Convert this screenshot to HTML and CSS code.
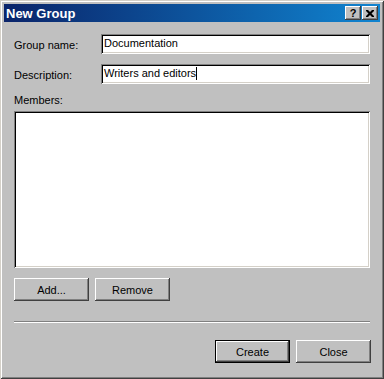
FILE: index.html
```html
<!DOCTYPE html>
<html lang="en">
<head>
    <meta charset="UTF-8">
    <title>New Group</title>
    <link rel="stylesheet" href="styles.css">
</head>
<body>

    <div class="window">
        <div class="titlebar">
            <span class="title">New Group</span>
            <div class="title-buttons">
                <button class="tb-btn">?</button>
                <button class="tb-btn">
                    <svg width="8" height="7" viewBox="0 0 8 7">
                        <path d="M0 0h2l2 2 2-2h2v1l-2.5 2.5L8 6v1H6L4 5 2 7H0V6l2.5-2.5L0 1z" fill="#000"/>
                    </svg>
                </button>
            </div>
        </div>

        <div class="content">
            <div class="field">
                <label>Group name:</label>
                <div class="input">Documentation</div>
            </div>
            <div class="field">
                <label>Description:</label>
                <div class="input">Writers and editors<span class="caret"></span></div>
            </div>

            <div class="members-label">Members:</div>
            <div class="list"></div>

            <div class="btn-row">
                <button class="btn">Add...</button>
                <button class="btn">Remove</button>
            </div>

            <div class="separator"></div>

            <div class="footer">
                <button class="btn default">Create</button>
                <button class="btn">Close</button>
            </div>
        </div>
    </div>

</body>
</html>
```

FILE: styles.css
```css
body {
    margin: 0;
    font-family: "Liberation Sans", Arial, sans-serif;
    font-size: 11px;
    color: #000;
}
.window {
    width: 384px;
    height: 379px;
    box-sizing: border-box;
    padding: 4px;
    background: #c0c0c0;
    box-shadow: inset 1px 1px #d4d0c8, inset -1px -1px #404040,
                inset 2px 2px #fff, inset -2px -2px #808080;
}
.titlebar {
    height: 18px;
    display: flex;
    align-items: center;
    justify-content: space-between;
    padding: 0 2px 0 2px;
    background: linear-gradient(to right, #0a246a, #1084d0);
}
.title {
    color: #fff;
    font-weight: bold;
    font-size: 13px;
}
.title-buttons {
    display: flex;
    gap: 1px;
}
.tb-btn {
    width: 16px;
    height: 14px;
    padding: 0;
    border: none;
    display: flex;
    align-items: center;
    justify-content: center;
    background: #c0c0c0;
    font-family: "Liberation Sans", Arial, sans-serif;
    font-weight: bold;
    font-size: 11px;
    color: #000;
    box-shadow: inset -1px -1px #404040, inset 1px 1px #fff, inset -2px -2px #808080;
}
.content {
    padding: 12px 10px 0 10px;
}
.field {
    display: grid;
    grid-template-columns: 87px 1fr;
    align-items: center;
    height: 20px;
    margin-bottom: 10px;
}
.field label {
    padding-top: 1px;
}
.input {
    height: 20px;
    box-sizing: border-box;
    background: #fff;
    padding: 3px 3px 0 3px;
    white-space: nowrap;
    box-shadow: inset 1px 1px #808080, inset -1px -1px #fff,
                inset 2px 2px #000, inset -2px -2px #d4d0c8;
}
.caret {
    display: inline-block;
    width: 1px;
    height: 13px;
    background: #000;
    vertical-align: -3px;
}
.members-label {
    margin-top: 3px;
    line-height: 13px;
}
.list {
    margin-top: 4px;
    height: 157px;
    background: #fff;
    box-shadow: inset 1px 1px #808080, inset -1px -1px #fff,
                inset 2px 2px #000, inset -2px -2px #d4d0c8;
}
.btn-row {
    display: flex;
    gap: 6px;
    margin-top: 10px;
}
.btn {
    width: 75px;
    height: 23px;
    padding: 0;
    border: none;
    background: #c0c0c0;
    font-family: "Liberation Sans", Arial, sans-serif;
    font-size: 11px;
    color: #000;
    box-shadow: inset -1px -1px #404040, inset 1px 1px #fff, inset -2px -2px #808080;
}
.btn.default {
    box-shadow: inset 0 0 0 1px #000, inset -2px -2px #404040,
                inset 2px 2px #fff, inset -3px -3px #808080;
}
.separator {
    margin-top: 20px;
    height: 1px;
    background: #808080;
    border-bottom: 1px solid #fff;
}
.footer {
    display: flex;
    justify-content: flex-end;
    gap: 6px;
    margin-top: 17px;
    margin-right: -1px;
}
```
